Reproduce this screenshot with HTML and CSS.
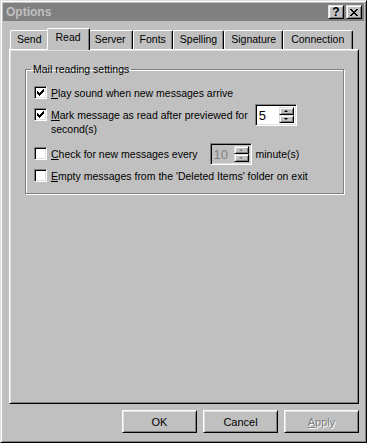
FILE: index.html
```html
<!DOCTYPE html>
<html lang="en">

<head>
    <meta charset="UTF-8">
    <meta name="viewport" content="width=device-width, initial-scale=1.0">
    <title>Options</title>
    <link rel="stylesheet" href="styles.css">
</head>

<body>
    <div class="window">
        <div class="titlebar">
            <span class="title">Options</span>
            <div class="caption-buttons">
                <div class="cap-btn help">?</div>
                <div class="cap-btn">
                    <svg width="8" height="7" viewBox="0 0 8 7" shape-rendering="crispEdges">
                        <path d="M0 0h2v1h-2zM6 0h2v1h-2zM1 1h2v1h-2zM5 1h2v1h-2zM2 2h4v1h-4zM3 3h2v1h-2zM2 4h4v1h-4zM1 5h2v1h-2zM5 5h2v1h-2zM0 6h2v1h-2zM6 6h2v1h-2z" fill="#000" />
                    </svg>
                </div>
            </div>
        </div>

        <div class="content">
            <div class="tabs">
                <div class="tab">Send</div>
                <div class="tab active">Read</div>
                <div class="tab">Server</div>
                <div class="tab">Fonts</div>
                <div class="tab">Spelling</div>
                <div class="tab">Signature</div>
                <div class="tab">Connection</div>
            </div>

            <div class="panel">
                <fieldset class="group">
                    <legend>Mail reading settings</legend>

                    <div class="option">
                        <span class="check checked">
                            <svg width="7" height="7" viewBox="0 0 7 7" shape-rendering="crispEdges">
                                <path d="M6 0h1v3h-1zM5 1h1v3h-1zM4 2h1v3h-1zM3 3h1v3h-1zM2 4h1v3h-1zM1 3h1v3h-1zM0 2h1v3h-1z" fill="#000" />
                            </svg>
                        </span>
                        <span><u>P</u>lay sound when new messages arrive</span>
                    </div>

                    <div class="option second">
                        <span class="check checked">
                            <svg width="7" height="7" viewBox="0 0 7 7" shape-rendering="crispEdges">
                                <path d="M6 0h1v3h-1zM5 1h1v3h-1zM4 2h1v3h-1zM3 3h1v3h-1zM2 4h1v3h-1zM1 3h1v3h-1zM0 2h1v3h-1z" fill="#000" />
                            </svg>
                        </span>
                        <span><u>M</u>ark message as read after previewed for</span>
                        <div class="spin">
                            <span class="spin-value">5</span>
                            <div class="spin-arrows">
                                <div class="arrow up"></div>
                                <div class="arrow down"></div>
                            </div>
                        </div>
                    </div>
                    <div class="wrap-line">second(s)</div>

                    <div class="option third">
                        <span class="check"></span>
                        <span><u>C</u>heck for new messages every</span>
                        <div class="spin disabled">
                            <span class="spin-value">10</span>
                            <div class="spin-arrows">
                                <div class="arrow up"></div>
                                <div class="arrow down"></div>
                            </div>
                        </div>
                        <span class="unit">minute(s)</span>
                    </div>

                    <div class="option fourth">
                        <span class="check"></span>
                        <span><u>E</u>mpty messages from the 'Deleted Items' folder on exit</span>
                    </div>
                </fieldset>
            </div>

            <div class="buttons">
                <button class="btn">OK</button>
                <button class="btn">Cancel</button>
                <button class="btn" disabled><u>A</u>pply</button>
            </div>
        </div>
    </div>
</body>

</html>
```

FILE: styles.css
```css
body {
    margin: 0;
    font-family: "Liberation Sans", Arial, sans-serif;
    font-size: 10.5px;
    color: #000;
    background-color: #c0c0c0;
}

.window {
    width: 367px;
    height: 443px;
    box-sizing: border-box;
    background-color: #c0c0c0;
    border: 1px solid;
    border-color: #dfdfdf #000 #000 #dfdfdf;
    box-shadow: inset 1px 1px #fff, inset -1px -1px #808080;
    padding: 2px;
}

.titlebar {
    height: 18px;
    background-color: #808080;
    color: #c0c0c0;
    display: flex;
    align-items: center;
    justify-content: space-between;
    padding: 0 2px 0 3px;
}

.title {
    font-weight: bold;
    font-size: 12px;
}

.caption-buttons {
    display: flex;
    gap: 2px;
}

.cap-btn {
    width: 16px;
    height: 14px;
    box-sizing: border-box;
    background-color: #c0c0c0;
    border: 1px solid;
    border-color: #dfdfdf #000 #000 #dfdfdf;
    box-shadow: inset 1px 1px #fff, inset -1px -1px #808080;
    display: flex;
    align-items: center;
    justify-content: center;
    color: #000;
}

.cap-btn.help {
    font-weight: bold;
    font-size: 12px;
    line-height: 12px;
}

.content {
    padding: 7px 0 0 6px;
}

/* tab strip */
.tabs {
    display: flex;
    align-items: flex-end;
    height: 21px;
    padding-left: 1px;
}

.tab {
    height: 19px;
    box-sizing: border-box;
    line-height: 17px;
    padding: 0 6px;
    border-top: 1px solid #fff;
    border-left: 1px solid #fff;
    border-right: 1px solid #000;
    border-radius: 2px 2px 0 0;
    box-shadow: inset -1px 0 #808080;
    background-color: #c0c0c0;
}

.tab:last-child {
    padding: 0 8px 0 7px;
}

.tab.active {
    height: 22px;
    margin: 0 -2px -1px;
    padding: 0 8px;
    line-height: 16px;
    position: relative;
    z-index: 1;
}

.panel {
    width: 350px;
    height: 355px;
    box-sizing: border-box;
    border: 1px solid;
    border-color: #fff #000 #000 #fff;
    box-shadow: inset 1px 1px #dfdfdf, inset -1px -1px #808080;
    padding: 13px 0 0 15px;
}

/* group box */
.group {
    width: 319px;
    height: 131px;
    box-sizing: border-box;
    margin: 0;
    padding: 10px 0 0 8px;
    min-width: 0;
    border: 1px solid #808080;
    box-shadow: inset 1px 1px #fff, 1px 1px #fff;
}

.group legend {
    padding: 0 2px;
    margin-left: -3px;
    line-height: 13px;
}

.option {
    display: flex;
    align-items: center;
    height: 13px;
    gap: 4px;
}

.option.second {
    margin-top: 9px;
}

.option.third {
    margin-top: 11px;
}

.option.fourth {
    margin-top: 9px;
}

.wrap-line {
    margin: 2px 0 0 17px;
    line-height: 13px;
}

.check {
    width: 13px;
    height: 13px;
    box-sizing: border-box;
    flex-shrink: 0;
    background-color: #fff;
    border: 1px solid;
    border-color: #808080 #fff #fff #808080;
    box-shadow: inset 1px 1px #000, inset -1px -1px #dfdfdf;
    display: flex;
    align-items: center;
    justify-content: center;
}

/* spin boxes */
.spin {
    width: 42px;
    height: 22px;
    box-sizing: border-box;
    flex-shrink: 0;
    margin-left: 3px;
    background-color: #fff;
    border: 1px solid;
    border-color: #808080 #fff #fff #808080;
    box-shadow: inset 1px 1px #000, inset -1px -1px #dfdfdf;
    padding: 2px;
    display: flex;
    justify-content: space-between;
}

.spin-value {
    padding-left: 1px;
    font-size: 13px;
    line-height: 17px;
}

.spin.disabled {
    background-color: #c0c0c0;
    margin-left: 8px;
}

.spin.disabled .spin-value {
    color: #808080;
}

.spin-arrows {
    width: 15px;
    display: flex;
    flex-direction: column;
}

.arrow {
    height: 9px;
    box-sizing: border-box;
    background-color: #c0c0c0;
    border: 1px solid;
    border-color: #dfdfdf #000 #000 #dfdfdf;
    box-shadow: inset 1px 1px #fff, inset -1px -1px #808080;
    display: flex;
    align-items: center;
    justify-content: center;
}

.arrow::after {
    content: "";
    border-left: 2px solid transparent;
    border-right: 2px solid transparent;
}

.arrow.up::after {
    border-bottom: 2px solid #000;
}

.arrow.down::after {
    border-top: 2px solid #000;
}

.spin.disabled .arrow.up::after {
    border-bottom-color: #808080;
}

.spin.disabled .arrow.down::after {
    border-top-color: #808080;
}

.unit {
    margin-left: 0;
}

/* dialog buttons */
.buttons {
    width: 350px;
    display: flex;
    justify-content: flex-end;
    gap: 6px;
    margin-top: 6px;
}

.btn {
    width: 75px;
    height: 23px;
    box-sizing: border-box;
    font-family: "Liberation Sans", Arial, sans-serif;
    font-size: 11px;
    color: #000;
    background-color: #c0c0c0;
    border: 1px solid;
    border-color: #fff #000 #000 #fff;
    box-shadow: inset 1px 1px #dfdfdf, inset -1px -1px #808080;
    padding: 0;
}

.btn:disabled {
    color: #808080;
    text-shadow: 1px 1px #fff;
}
```
